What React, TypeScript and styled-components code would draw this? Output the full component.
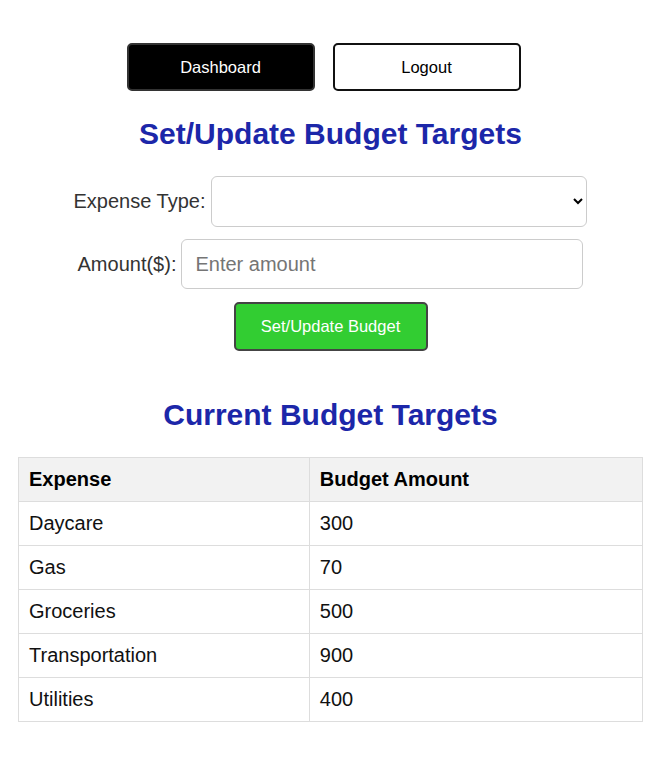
import React, { useState } from "react";
import styled, { createGlobalStyle } from "styled-components";

const GlobalStyle = createGlobalStyle`
  body {
    margin: 0;
    background: #ffffff;
    font-family: "Liberation Sans", Arial, sans-serif;
  }
`;

const Page = styled.div`
  padding: 43px 17px 40px 18px;
`;

const Nav = styled.nav`
  display: flex;
  justify-content: center;
  gap: 18px;
  padding-right: 14px;
`;

const NavButton = styled.button<{ $dark?: boolean }>`
  width: 188px;
  height: 48px;
  border-radius: 5px;
  border: 2px solid ${({ $dark }) => ($dark ? "#333" : "#111")};
  background: ${({ $dark }) => ($dark ? "#000" : "#fff")};
  color: ${({ $dark }) => ($dark ? "#fff" : "#000")};
  font-family: "Liberation Sans", Arial, sans-serif;
  font-size: 16.5px;
  cursor: pointer;
`;

const Title = styled.h2<{ $top: number; $bottom: number }>`
  margin: ${({ $top }) => $top}px 0 ${({ $bottom }) => $bottom}px;
  text-align: center;
  font-size: 30px;
  font-weight: bold;
  color: #1c27a9;
`;

const Form = styled.form`
  display: flex;
  flex-direction: column;
  align-items: center;
  gap: 12px;
`;

const Row = styled.div`
  display: flex;
  align-items: center;
  justify-content: center;
  gap: 5px;
`;

const Label = styled.label`
  font-size: 20px;
  color: #333;
`;

const Select = styled.select`
  width: 376px;
  height: 51px;
  margin-left: 1px;
  padding: 0 10px;
  border: 1px solid #ccc;
  border-radius: 6px;
  background: #fff;
  font-size: 20px;
  font-family: "Liberation Sans", Arial, sans-serif;
`;

const Input = styled.input`
  box-sizing: border-box;
  width: 402px;
  height: 50px;
  padding: 0 13px;
  border: 1px solid #ccc;
  border-radius: 6px;
  font-size: 20px;
  font-family: "Liberation Sans", Arial, sans-serif;
  &::placeholder {
    color: #757575;
  }
`;

const SubmitButton = styled.button`
  margin-top: 1px;
  width: 194px;
  height: 49px;
  border: 2px solid #444;
  border-radius: 5px;
  background: #32cd32;
  color: #fff;
  font-size: 16.5px;
  font-family: "Liberation Sans", Arial, sans-serif;
  cursor: pointer;
`;

const Table = styled.table`
  width: 100%;
  border-collapse: collapse;
  font-size: 20px;
`;

const Th = styled.th<{ $w?: string }>`
  width: ${({ $w }) => $w || "auto"};
  padding: 10px;
  border: 1px solid #ddd;
  background: #f2f2f2;
  text-align: left;
  font-weight: bold;
  color: #000;
`;

const Td = styled.td`
  padding: 10px;
  border: 1px solid #ddd;
  color: #111;
`;

const budgets = [
  { expense: "Daycare", amount: 300 },
  { expense: "Gas", amount: 70 },
  { expense: "Groceries", amount: 500 },
  { expense: "Transportation", amount: 900 },
  { expense: "Utilities", amount: 400 },
];

export default function App() {
  const [amount, setAmount] = useState("");

  return (
    <Page>
      <GlobalStyle />
      <Nav>
        <NavButton $dark>Dashboard</NavButton>
        <NavButton>Logout</NavButton>
      </Nav>

      <Title $top={26} $bottom={25}>Set/Update Budget Targets</Title>

      <Form onSubmit={(e) => e.preventDefault()}>
        <Row>
          <Label htmlFor="expenseType">Expense Type:</Label>
          <Select id="expenseType" defaultValue="">
            <option value=""></option>
            {budgets.map((b) => (
              <option key={b.expense} value={b.expense}>
                {b.expense}
              </option>
            ))}
          </Select>
        </Row>
        <Row>
          <Label htmlFor="amount">Amount($):</Label>
          <Input
            id="amount"
            type="number"
            placeholder="Enter amount"
            value={amount}
            onChange={(e) => setAmount(e.target.value)}
          />
        </Row>
        <SubmitButton type="submit">Set/Update Budget</SubmitButton>
      </Form>

      <Title $top={47} $bottom={25}>Current Budget Targets</Title>

      <Table>
        <thead>
          <tr>
            <Th $w="46.6%">Expense</Th>
            <Th>Budget Amount</Th>
          </tr>
        </thead>
        <tbody>
          {budgets.map((b) => (
            <tr key={b.expense}>
              <Td>{b.expense}</Td>
              <Td>{b.amount}</Td>
            </tr>
          ))}
        </tbody>
      </Table>
    </Page>
  );
}
